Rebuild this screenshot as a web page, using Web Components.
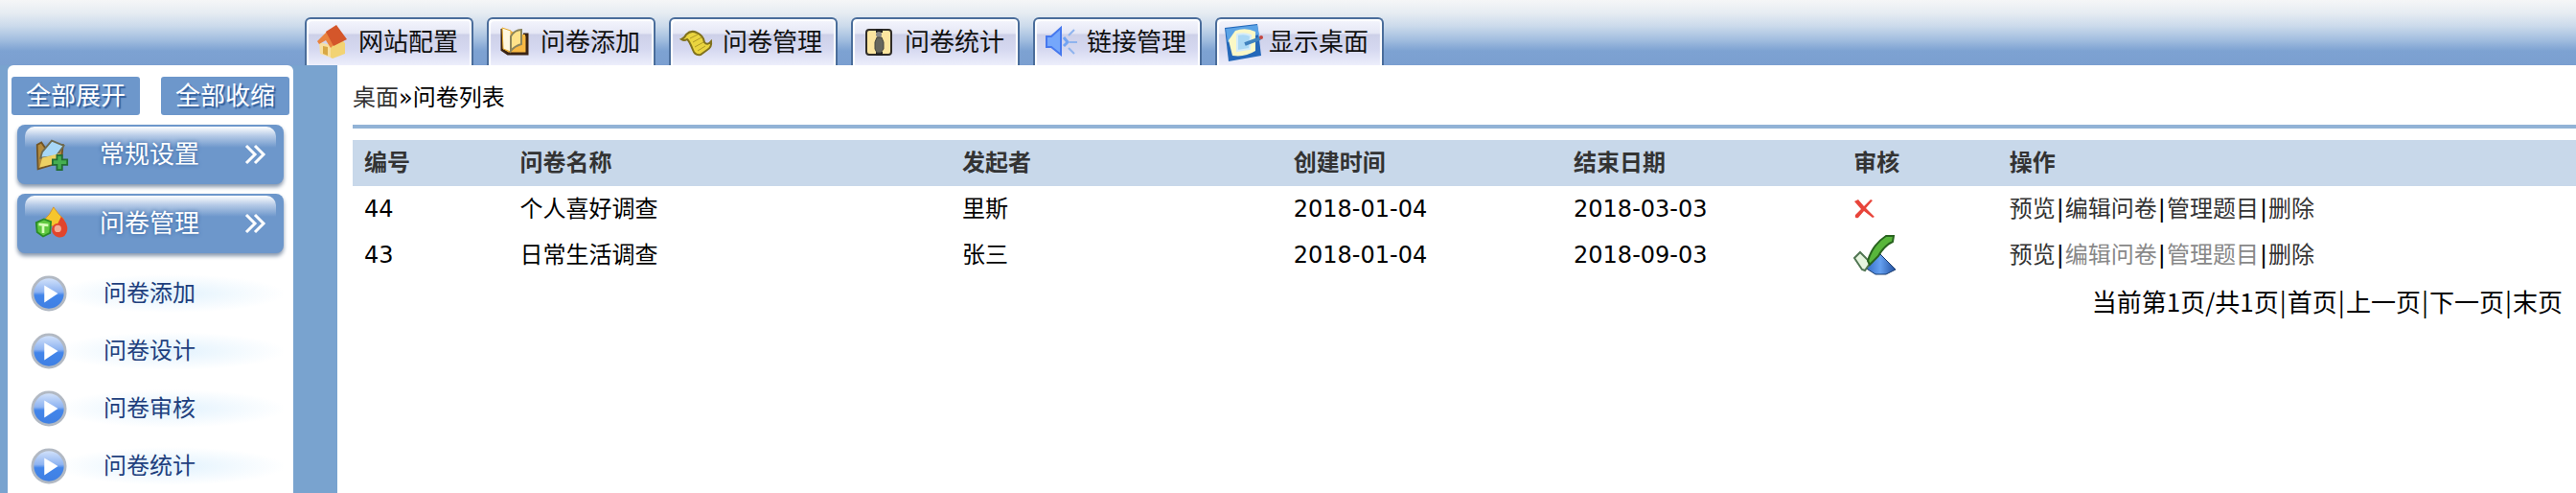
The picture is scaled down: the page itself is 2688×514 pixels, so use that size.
<!DOCTYPE html>
<html lang="zh-CN">
<head>
<meta charset="utf-8">
<title>问卷列表</title>
<style>
html,body{margin:0;min-height:100%}
body{background:#fff;font-family:"DejaVu Sans","Noto Sans CJK SC",sans-serif;font-size:24px}
</style>
</head>
<body>
<survey-app></survey-app>
<script>
const ICONS = {
home:`<path d="M5 20 17 23V36L6 32Z" fill="#f8dfa0"/><path d="M17 23 27 16 32 21V32L19 37 17 36Z" fill="#f2d374"/><path d="M3 19 13 9 21 22 17 26 12 18 5 22Z" fill="#e9823f"/><path d="M12 9 23 2 34 17 20 24Z" fill="#d4562a"/><path d="M9 24 14 25V34L9 32Z" fill="#d8a845"/>`,
book:`<path d="M6 6V28L12 32H32V12H28" fill="#f8b944" stroke="#3a2414" stroke-width="3"/><path d="M12 29V12H30V30H13Z" fill="#f8b944"/><path d="M6 5 15 8V30L7 27Z" fill="#fff8df" stroke="#e5a92e" stroke-width="1"/><path d="M15 29V14Q19 7 26 7V22Q19 24 15 29Z" fill="#ffe28a" stroke="#8c855c" stroke-width="2"/>`,
scroll:`<path d="M3 17Q6 16 8 12Q13 7 19 10Q26 13 27 20Q30 24 34 19Q35 25 30 28L23 33Q17 34 15 28Q11 18 9 17Q6 19 3 17Z" fill="#ead53f" stroke="#80711d" stroke-width="2"/><path d="m12 16 8-4M15 20l9-5M17 25l9-5M20 29l8-5" stroke="#b09a25" stroke-width="1"/>`,
stats:`<rect x="6" y="7" width="26" height="26" rx="3" fill="#fce5a0" stroke="#2f2c28" stroke-width="2"/><path d="M16 6h7v4h-7zM16 30h7v4h-7z" fill="#222"/><circle cx="19" cy="12" r="3" fill="#888"/><path d="M17 15h5l2 5v7l-3 4h-4l-2-4v-7Z" fill="#66665e" stroke="#45453e"/>`,
sound:`<path d="M4 14h5L19 5v28L9 25H4Z" fill="#75a7fb" stroke="#4678ee" stroke-width="2"/><path d="m22 15 4 5-4 4" fill="none" stroke="#73a4f2" stroke-width="3"/><path d="m27 13 6-6M28 20h8M27 26l6 6" fill="none" stroke="#8fb4ee" stroke-width="2"/>`,
desk:`<path d="M0 5 34 1 38 34 4 40Z" fill="#2468b9"/><path d="M1 6 34 2 36 12 3 20Z" fill="#5ba3e6"/><path d="M11 8Q22 4 32 9L32 29Q21 36 8 34L4 18Z" fill="#fbf8c6"/><path d="M13 12Q21 10 27 13L26 27 13 29Z" fill="#abd8f4" stroke="#d5ecfa" stroke-width="2"/><path d="m21 22 16-6" stroke="#3f82be" stroke-width="4"/><circle cx="38" cy="15" r="2" fill="#c4453e"/>`,
folder:`<path d="M3 9 8 6 12 12 33 9 31 29 4 37Z" fill="#b48b3e" stroke="#705426" stroke-width="2"/><path d="M9 17 20 4 34 10 25 22 7 24Z" fill="#a7d7f6" stroke="#6d6b52" stroke-width="2"/><path d="M9 24 29 19 26 30 6 35Z" fill="#ecd064"/><path d="M26 21h6v5h6v6h-6v6h-6v-6h-5v-6h5Z" fill="#45ae51" stroke="#226d34" stroke-width="2"/>`,
shapes:`<path d="M22 1Q28 10 34 15L31 23H12L12 15Q18 10 22 1Z" fill="#f6c62d" stroke="#d6902b"/><path d="m2 19 9-4 8 3-1 13-8 4-7-5Z" fill="#5fc83f" stroke="#298b26" stroke-width="2"/><path d="m5 21 11 1M10 22v9" stroke="#d5ffb8" stroke-width="3"/><path d="M31 12Q39 20 38 28Q36 37 28 36Q20 34 20 26Q22 20 27 20Z" fill="#e2452c"/><circle cx="27" cy="26" r="4" fill="#f3ab95"/>`,
play:`<defs><linearGradient id="g" x2="0" y2="1"><stop stop-color="#d7e5fb"/><stop offset=".45" stop-color="#8fb4f1"/><stop offset=".55" stop-color="#4285ea"/><stop offset="1" stop-color="#3f7fe2"/></linearGradient></defs><circle cx="20" cy="20" r="18" fill="url(#g)" stroke="#b2b9c3" stroke-width="3"/><path d="m15 11 15 9-15 10Z" fill="#fff"/>`,
cross:`<path d="M1 3 5 1 11 8 18 1 20 2 13 10 22 19 20 20 11 13 5 20Q1 21 2 17L8 11Z" fill="#e8443a"/>`,
check:`<defs><linearGradient id="b"><stop stop-color="#2e66c0"/><stop offset=".5" stop-color="#65a0f0"/><stop offset="1" stop-color="#214f9f"/></linearGradient></defs><path d="M28 20 44 36 34 41 23 41 12 34Z" fill="url(#b)" stroke="#193b6d"/><path d="M1 24 7 18 15 26 17 30 12 37 9 36Z" fill="#e6f5df" stroke="#507552" stroke-width="2"/><path d="M15 27Q20 10 34 1L42 1 41 7Q32 11 26 22L17 31Z" fill="#58b63b" stroke="#28621f" stroke-width="2"/>`,
more:`<path d="m3 3 9 9-9 9M12 3l9 9-9 9" fill="none" stroke="#fff" stroke-width="3"/>`
};
const BOX = {more:'0 0 24 24',cross:'0 0 22 22',check:'0 0 45 42'};
function define(name, html){
  const t=document.createElement('template'); t.innerHTML=html;
  customElements.define(name, class extends HTMLElement{
    constructor(){super();this.attachShadow({mode:'open'}).append(t.content.cloneNode(true));}
  });
}
customElements.define('ui-icon', class extends HTMLElement{
  connectedCallback(){
    const n=this.getAttribute('name');
    const root=this.shadowRoot||this.attachShadow({mode:'open'});
    root.innerHTML=`<style>:host{display:block;flex:none;width:38px;height:38px}svg{display:block;width:100%;height:100%}</style><svg aria-hidden="true" viewBox="${BOX[n]||'0 0 40 40'}">${ICONS[n]}</svg>`;
  }
});
define('nav-tab',`<style>
:host{display:block;flex:none;width:176px}
a{box-sizing:border-box;height:50px;display:flex;align-items:center;gap:6px;padding:0 0 0 8px;border:2px solid #4a6d9b;border-bottom:0;border-radius:6px 6px 0 0;background:linear-gradient(#f4f5fd 0,#e6e8f5 30%,#cdd0e8 34%,#d5d8f0 65%,#eceefb 100%);box-shadow:inset 2px 2px 1px #fff,inset -2px 0 1px #fff;color:#111;font-size:26px;line-height:32px;text-decoration:none;white-space:nowrap}
::slotted(ui-icon){width:40px;height:40px}
</style><a href="#"><slot name="icon"></slot><slot></slot></a>`);
define('tool-button',`<style>
:host{display:block;width:134px}
button{font:inherit;font-size:26px;line-height:40px;width:100%;height:40px;border:0;border-radius:3px;padding:0;background:#6d97cb;color:#fff;text-shadow:2px 2px 1px #315f9c;white-space:nowrap}
</style><button type="button"><slot></slot></button>`);
define('menu-group',`<style>
:host{display:block}
button{font:inherit;font-size:26px;line-height:32px;box-sizing:border-box;width:100%;height:62px;display:grid;grid-template-columns:36px 1fr 24px;align-items:center;border:0;border-radius:8px;padding:2px 18px;color:#fff;background:#6d97cb;box-shadow:0 3px 4px #8797ad;text-shadow:0 0 4px #315f9c;position:relative}
button::before{content:"";position:absolute;inset:2px 8px auto;height:22px;border-radius:10px 10px 0 0;background:linear-gradient(#fff,#b4c9e6 45%,#6d97cb)}
button>*,::slotted(ui-icon){position:relative}
.label{text-align:left;padding-left:32px}
.more{width:24px;height:24px}
::slotted(ui-icon){width:36px;height:36px}
</style><button type="button"><slot name="icon"></slot><span class="label"><slot></slot></span><ui-icon class="more" name="more"></ui-icon></button>`);
define('menu-item',`<style>
:host{display:block}
a{display:grid;grid-template-columns:38px 1fr;column-gap:38px;align-items:center;height:60px;padding-left:14px;color:#213f7d;text-decoration:none;line-height:32px;background:radial-gradient(closest-side,#e2f2fd,#fff) 40px 10px/240px 40px no-repeat}
</style><a href="#"><ui-icon name="play"></ui-icon><slot></slot></a>`);
define('side-bar',`<style>
:host{display:block;box-sizing:border-box;background:#fff;border-radius:6px 6px 0 0;padding:12px 4px 0}
.tools{display:flex;justify-content:space-between}
.groups{display:grid;gap:10px;padding:10px 6px 0}
nav{padding:12px 6px 0}
</style>
<div class="tools"><tool-button>全部展开</tool-button><tool-button>全部收缩</tool-button></div>
<div class="groups"><menu-group><ui-icon slot="icon" name="folder"></ui-icon>常规设置</menu-group><menu-group><ui-icon slot="icon" name="shapes"></ui-icon>问卷管理</menu-group></div>
<nav><menu-item>问卷添加</menu-item><menu-item>问卷设计</menu-item><menu-item>问卷审核</menu-item><menu-item>问卷统计</menu-item></nav>`);
define('survey-table',`<style>
:host{display:block}
table{width:100%;table-layout:fixed;border-collapse:collapse;line-height:32px}
th,td{height:48px;padding:0 0 0 12px;text-align:left;box-sizing:border-box;white-space:nowrap}
thead{background:#c8d8ea;color:#333}
th{font-weight:700}
a{color:#333;text-decoration:none}a.off{color:#888}
i{font-style:normal;padding:0 1px}
ui-icon{width:22px;height:22px}ui-icon.ok{width:45px;height:42px}
</style>
<table><colgroup><col style="width:7%"><col style="width:19.9%"><col style="width:14.9%"><col style="width:12.6%"><col style="width:12.6%"><col style="width:7%"><col></colgroup>
<thead><tr><th>编号</th><th>问卷名称</th><th>发起者</th><th>创建时间</th><th>结束日期</th><th>审核</th><th>操作</th></tr></thead>
<tbody><tr><td>44</td><td>个人喜好调查</td><td>里斯</td><td>2018-01-04</td><td>2018-03-03</td><td><ui-icon name="cross"></ui-icon></td><td><a href="#">预览</a><i>|</i><a href="#">编辑问卷</a><i>|</i><a href="#">管理题目</a><i>|</i><a href="#">删除</a></td></tr>
<tr><td>43</td><td>日常生活调查</td><td>张三</td><td>2018-01-04</td><td>2018-09-03</td><td><ui-icon class="ok" name="check"></ui-icon></td><td><a href="#">预览</a><i>|</i><a href="#" class="off">编辑问卷</a><i>|</i><a href="#" class="off">管理题目</a><i>|</i><a href="#">删除</a></td></tr></tbody></table>`);
define('page-nav',`<style>
:host{display:block;text-align:right;font-family:"Noto Sans CJK SC",sans-serif;font-size:26px;line-height:48px;padding-right:14px}
a{color:#000;text-decoration:none}
i{font-style:normal;padding:0 1px}
</style>当前第1页/共1页<i>|</i><a href="#">首页</a><i>|</i><a href="#">上一页</a><i>|</i><a href="#">下一页</a><i>|</i><a href="#">末页</a>`);
define('survey-app',`<style>
:host{display:flex;flex-direction:column;min-height:100vh;background:#79a3cf}
header{box-sizing:border-box;height:68px;display:flex;gap:14px;padding:18px 0 0 318px;background:linear-gradient(#f5f6f7 0,#e6ecf2 20%,#cbdaeb 40%,#a4bfe0 60%,#7da2d2 78%,#7b9fd0)}
.body{flex:1;display:grid;grid-template-columns:298px 1fr;column-gap:46px;padding-left:8px}
main{background:#fff;padding:0 0 0 16px}
.crumb{line-height:32px;padding:18px 0 12px;border-bottom:4px solid #92b3d6;margin-bottom:12px}
.crumb a{color:#333;text-decoration:none}
</style>
<header><nav-tab><ui-icon slot="icon" name="home"></ui-icon>网站配置</nav-tab><nav-tab><ui-icon slot="icon" name="book"></ui-icon>问卷添加</nav-tab><nav-tab><ui-icon slot="icon" name="scroll"></ui-icon>问卷管理</nav-tab><nav-tab><ui-icon slot="icon" name="stats"></ui-icon>问卷统计</nav-tab><nav-tab><ui-icon slot="icon" name="sound"></ui-icon>链接管理</nav-tab><nav-tab><ui-icon slot="icon" name="desk"></ui-icon>显示桌面</nav-tab></header>
<div class="body"><side-bar></side-bar><main><div class="crumb"><a href="#">桌面</a>»问卷列表</div><survey-table></survey-table><page-nav></page-nav></main></div>`);
</script>
</body>
</html>
